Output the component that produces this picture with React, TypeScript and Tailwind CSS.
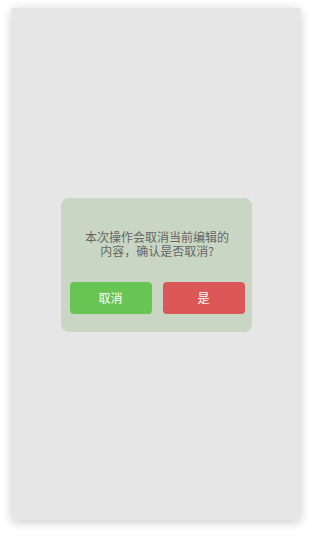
export default function App() {
  return (
    <main className="min-h-screen w-[312px] bg-white pt-[8px] font-['Noto_Sans_CJK_SC','Noto_Sans',sans-serif]">
      <div className="mx-auto flex h-[512px] w-[288px] items-center justify-center bg-[#e6e6e6] shadow-[0_2px_10px_rgba(0,0,0,0.22)]">
        <section className="mt-[1px] flex h-[134px] w-[191px] flex-col rounded-[8px] bg-[#c8d6c3] pl-[9px] pr-[7px] pt-[32px]">
          <p className="text-center text-[12px] leading-[14px] text-[#666666]">
            本次操作会取消当前编辑的
            <br />
            内容，确认是否取消?
          </p>
          <div className="mt-[24px] flex gap-[11px]">
            <button
              type="button"
              className="h-[32px] w-[82px] rounded-[4px] bg-[#68c553] text-[12px] text-white"
            >
              取消
            </button>
            <button
              type="button"
              className="h-[32px] w-[82px] rounded-[4px] bg-[#dc5757] text-[12px] text-white"
            >
              是
            </button>
          </div>
        </section>
      </div>
    </main>
  );
}
